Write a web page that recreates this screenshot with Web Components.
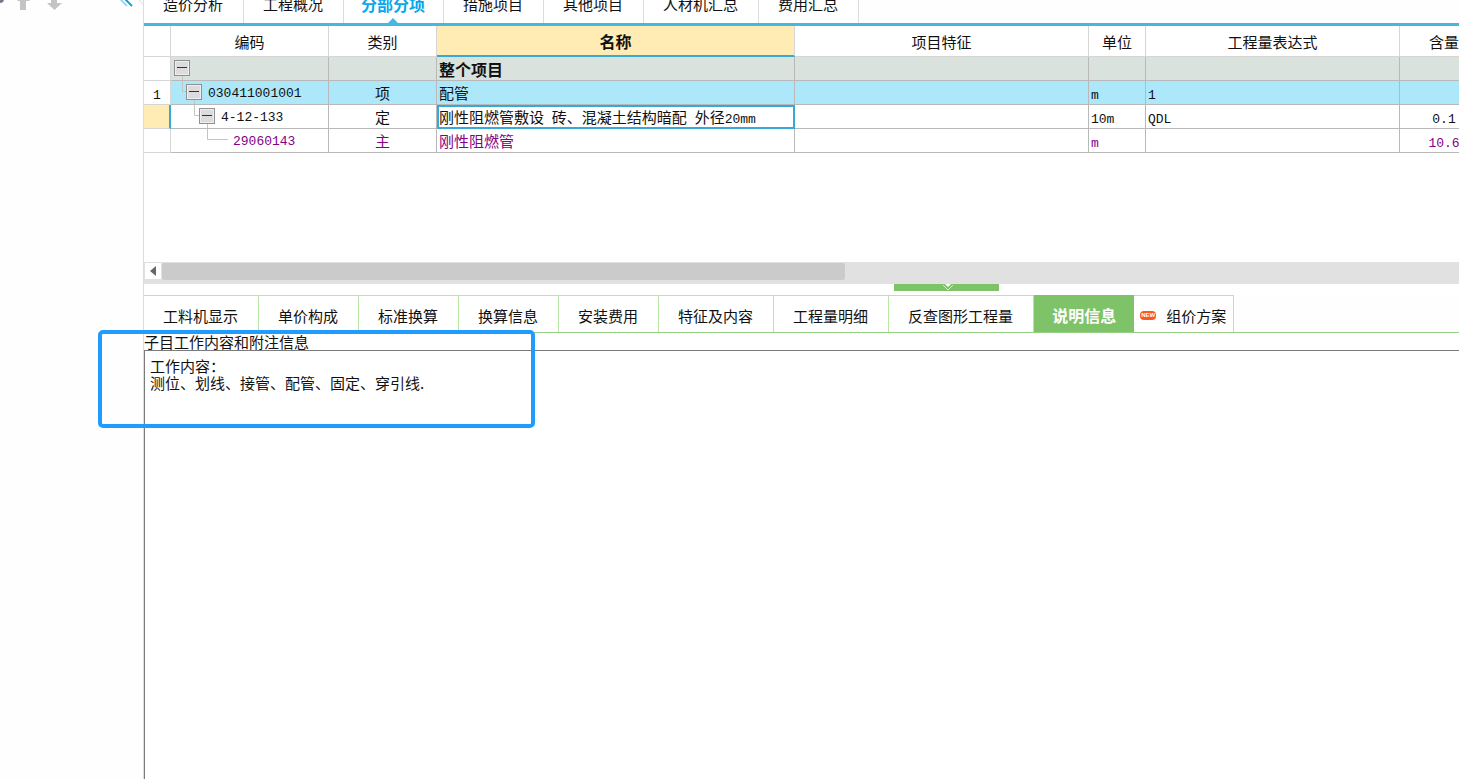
<!DOCTYPE html>
<html lang="zh-CN">
<head>
<meta charset="utf-8">
<title>分部分项</title>
<style>
html, body { height: 100%; margin: 0; }
body { background: #fefefe; color: #111; font: 15px/20px "Noto Sans CJK SC", sans-serif; overflow: hidden; }
</style>
</head>
<body>
<cost-app>
  <side-tools slot="side"></side-tools>
  <page-tabs></page-tabs>
  <bill-grid></bill-grid>
  <grid-scroll></grid-scroll>
  <pane-handle></pane-handle>
  <detail-tabs></detail-tabs>
  <note-pane label="子目工作内容和附注信息">工作内容：
测位、划线、接管、配管、固定、穿引线.</note-pane>
</cost-app>

<script>
class Part extends HTMLElement {
  connectedCallback() {
    if (this.shadowRoot) return;
    this.attachShadow({ mode: "open" }).innerHTML = `<style>
      *, :host { box-sizing: border-box; }
      button { appearance: none; margin: 0; border: 0; background: none; font: inherit; color: inherit; white-space: nowrap; }
      svg { display: block; }
      ${this.styles()}</style>${this.markup()}`;
  }
}

customElements.define("cost-app", class extends Part {
  styles() { return `
    :host { display: grid; grid-template-columns: 144px minmax(0, 1fr); height: 100vh; position: relative; }
    main { display: flex; flex-direction: column; min-width: 0; min-height: 0; }
    ::slotted(note-pane) { flex: 1; }
    .mark { position: absolute; left: 98px; top: 330px; width: 437px; height: 98px;
      border: 4px solid #1e9cff; border-radius: 5px; pointer-events: none; }`; }
  markup() { return `<slot name="side"></slot><main><slot></slot></main><div class="mark"></div>`; }
});

customElements.define("side-tools", class extends Part {
  styles() { return `
    :host { display: block; border-right: 1px solid #dcdcdc; }
    div { display: flex; height: 12px; }
    button { padding: 0; height: 12px; }
    .collapse { margin-left: auto; }`; }
  markup() { return `<div>
    <button aria-label="查找"><svg width="16" height="12"><circle cx="0" cy="-1" r="4" fill="#73788a"/></svg></button>
    <button aria-label="上移"><svg width="30" height="12"><path d="M1 1 7-6 14 1H10V10H4V1Z" fill="#c4c4c4"/></svg></button>
    <button aria-label="下移"><svg width="20" height="12"><path d="M5-1h6V3h5L8.500 10 1 3H5Z" fill="#c4c4c4"/></svg></button>
    <button class="collapse" aria-label="收起"><svg width="24" height="12"><path d="M1-1 8 6" stroke="#82d3ec" stroke-width="1.500"/><path d="M6-1 13 6" stroke="#16a2d0" stroke-width="2"/><path d="M19-1 24 4" stroke="#dcdcdc"/></svg></button>
  </div>`; }
});

customElements.define("page-tabs", class extends Part {
  styles() { return `
    :host { display: flex; align-items: flex-end; height: 26px; flex: none; overflow: hidden; border-bottom: 3px solid #45b8e0; }
    button { position: relative; flex: none; padding: 0 20px 9px 19px; line-height: 20px; border-right: 1px solid #dcdcdc; background: #fff; }
    .on { padding: 0 18px 9px 17px; font-size: 16px; font-weight: 700; color: #07a7ea; }
    .on::after { content: ""; position: absolute; left: 44px; bottom: 0; border: 5px solid transparent; border-top: 0; border-bottom-color: #45b8e0; }`; }
  markup() { return ["造价分析", "工程概况", "分部分项", "措施项目", "其他项目", "人材机汇总", "费用汇总"]
    .map(t => `<button${t === "分部分项" ? ' class="on"' : ""}>${t}</button>`).join(""); }
});

customElements.define("bill-grid", class extends Part {
  styles() { return `
    :host { display: block; height: 236px; flex: none; overflow: hidden; background: #fff; }
    table { border-collapse: separate; border-spacing: 0; table-layout: fixed; width: 1345px; min-width: 100%; }
    th, td { padding: 0 2px; border: solid #b9b9b9; border-width: 0 1px 1px 0; white-space: nowrap; text-align: left; overflow: hidden; }
    th { height: 31px; padding-top: 1px; font-weight: 400; text-align: center; border-color: #d6d6d6; }
    th.on { padding-top: 0; background: #feecb4; font-size: 16px; font-weight: 700; border-bottom: 2px solid #36a9d8; }
    td { height: 24px; line-height: 22px; }
    td:first-child { background: #fff; text-align: center; border-color: #d6d6d6; }
    td:nth-child(3), td:nth-child(8) { text-align: center; }
    td:nth-child(2) { padding: 0; }
    .tree { display: flex; height: 23px; align-items: center; }
    .tree svg { flex: none; }
    .tree .n { padding-top: 2px; }
    .total td { background: #d9e2dd; font-size: 16px; font-weight: 700; }
    .item td { background: #ade8fa; }
    .total td:first-child, .item td:first-child { background: #fff; }
    .main { color: #850085; }
    .now td:first-child { background: #feecb4; border-right: 2px solid #36a9d8; }
    .now td.cell { outline: 2px solid #36a9d8; outline-offset: -2px; }
    .n { font: 13px/14px "Liberation Mono", monospace; white-space: pre; }`; }
  box(x) { return `<rect x="${x + .5}" y="3.500" width="15" height="15" fill="#eee" stroke="#919191"/><rect x="${x + 2}" y="5" width="12" height="12" fill="#dcdcdf"/><path d="M${x + 3} 10.500h10" stroke="#333"/>`; }
  tree(w, line, x, text) { return `<div class="tree"><svg width="${w}" height="23"><path d="${line}" fill="none" stroke="#c4c4c4"/>${x === null ? "" : this.box(x)}</svg><span class="n">${text}</span></div>`; }
  markup() {
    const n = t => `<span class="n">${t}</span>`;
    const rows = [
      ["total", "", this.tree(20, "M11.500 19V23", 3, ""), "", "整个项目", "", "", "", ""],
      ["item", n("1"), this.tree(37, "M11.500 0V10.500H16M23.500 19V23", 15, "030411001001"), "项", "配管", "", n("m"), n("1"), ""],
      ["now", "", this.tree(50, "M23.500 0V10.500H28M36.500 19V23", 28, "4-12-133"), "定", `刚性阻燃管敷设${n(" ")}砖、混凝土结构暗配${n(" ")}外径${n("20mm")}`, "", n("10m"), n("QDL"), n("0.1")],
      ["main", "", this.tree(62, "M36.500 0V10.500H57", null, "29060143"), "主", "刚性阻燃管", "", n("m"), "", n("10.6")]
    ];
    return `<table><colgroup>${[27, 158, 108, 358, 294, 57, 254, 89].map(w => `<col style="width:${w}px">`).join("")}</colgroup>
      <thead><tr>${["", "编码", "类别", "名称", "项目特征", "单位", "工程量表达式", "含量"].map(h => `<th${h === "名称" ? ' class="on"' : ""}>${h}</th>`).join("")}</tr></thead>
      <tbody>${rows.map(([c, ...cells]) => `<tr class="${c}">${cells.map((t, i) => `<td${i === 3 ? ' class="cell"' : ""}>${t}</td>`).join("")}</tr>`).join("")}</tbody></table>`;
  }
});

customElements.define("grid-scroll", class extends Part {
  styles() { return `
    :host { display: flex; flex: none; height: 22px; padding: 1px 0 4px 1px; gap: 1px; background: #e1e1e1; }
    button { width: 16px; height: 16px; padding: 3px 5px; background: #fff; }
    div { width: 52%; height: 17px; border-radius: 2px; background: #cbcbcb; }`; }
  markup() { return `<button aria-label="向左滚动"><svg width="6" height="10"><path d="M6 0V10L0 5Z" fill="#666"/></svg></button><div></div>`; }
});

customElements.define("pane-handle", class extends Part {
  styles() { return `
    :host { display: flex; flex: none; height: 11px; padding-left: 750px; background: #fff; }
    button { width: 105px; height: 7px; padding: 0 48px; background: #7fc369; }`; }
  markup() { return `<button aria-label="收起下方面板"><svg width="12" height="7"><path d="M3 0H9L6 3Z" fill="#fff"/><path d="M1 1 6 6 11 1" fill="none" stroke="#d4f0ca"/></svg></button>`; }
});

customElements.define("detail-tabs", class extends Part {
  styles() { return `
    :host { display: flex; flex: none; height: 38px; border-bottom: 1px solid #96d087; }
    button { flex: none; padding: 4px 20px 0 19px; border: 0 solid #b8e6a4; border-right-width: 1px; box-shadow: inset 0 1px #b8e6a4; background: #fff; }
    .on { padding: 2px 18px 0; font-size: 16px; font-weight: 700; color: #fff; background: #7fc369; border: 0; box-shadow: none; }
    .new { display: flex; align-items: center; gap: 10px; padding: 4px 7px 0 6px; }
    i { width: 16px; height: 9px; border-radius: 4px; background: #fa5a1e; color: #fff; font: 700 6px/9px "Liberation Sans", sans-serif; text-align: center; }`; }
  markup() { return ["工料机显示", "单价构成", "标准换算", "换算信息", "安装费用", "特征及内容", "工程量明细", "反查图形工程量"]
    .map(t => `<button>${t}</button>`).join("") + `<button class="on">说明信息</button><button class="new"><i>NEW</i><span>组价方案</span></button>`; }
});

customElements.define("note-pane", class extends Part {
  styles() { return `
    :host { display: flex; flex-direction: column; min-height: 0; background: #fff; }
    label { height: 17px; line-height: 18px; flex: none; }
    textarea { flex: 1; width: 100%; margin: 0; padding: 6px 5px; border: solid #7b7b7b; border-width: 1px 0 0 1px; border-radius: 0;
      outline: 0; resize: none; background: #fff; color: inherit; font: inherit; line-height: 17px; }`; }
  markup() { return `<label for="note">${this.getAttribute("label")}</label><textarea id="note" readonly>${this.textContent}</textarea>`; }
});
</script>
</body>
</html>
